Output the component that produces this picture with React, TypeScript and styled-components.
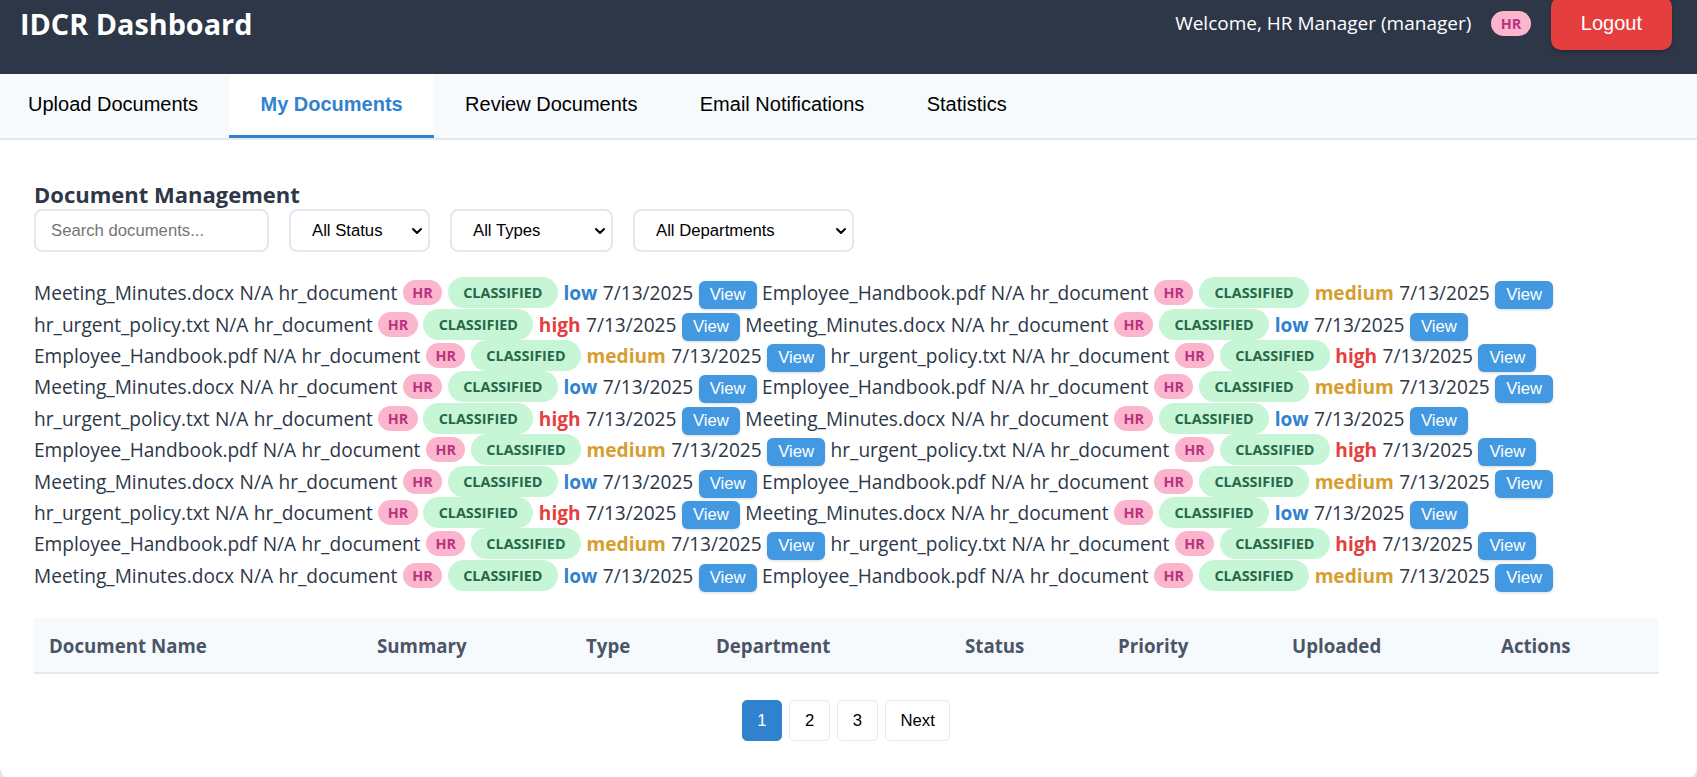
import React from "react";
import styled, { createGlobalStyle } from "styled-components";
import { ChevronDown } from "lucide-react";

const GlobalStyle = createGlobalStyle`
  html, body { margin: 0; padding: 0; background: #e2e8f0; }
  body { font-family: "Open Sans", "Noto Sans", sans-serif; color: #2d3748; }
  *, *::before, *::after { box-sizing: border-box; }
`;

const Header = styled.header`
  height: 74px;
  background: #2d3748;
  display: flex;
  align-items: center;
  justify-content: space-between;
  padding: 0 25px 28px 20px;
`;

const Title = styled.h1`
  margin: 0;
  font-size: 28.8px;
  font-weight: 700;
  line-height: 1.2;
  color: #ffffff;
  transform: translateY(1px);
`;

const UserArea = styled.div`
  display: flex;
  align-items: center;
  gap: 20px;
`;

const Welcome = styled.span`
  font-size: 19px;
  color: #ffffff;
`;

const DeptBadge = styled.span`
  display: inline-block;
  height: 25px;
  line-height: 25px;
  padding: 0 9.5px;
  border-radius: 13px;
  background: #fbb6ce;
  color: #b83280;
  font-size: 14.4px;
  font-weight: 700;
  word-spacing: 0;
  vertical-align: 2px;
`;

const LogoutButton = styled.button`
  height: 53px;
  padding: 0 30px;
  border: none;
  border-radius: 10px;
  background: #e53e3e;
  color: #ffffff;
  font-family: "Liberation Sans", Arial, sans-serif;
  font-size: 20px;
  box-shadow: 0 2px 4px rgba(0, 0, 0, 0.2);
  cursor: pointer;
`;

const TabBar = styled.nav`
  display: flex;
  height: 66px;
  background: #f7fafc;
  border-bottom: 2px solid #e2e8f0;
`;

const Tab = styled.button<{ $active?: boolean }>`
  height: 64px;
  padding: 0 31.2px;
  border: none;
  border-bottom: 3px solid ${(p) => (p.$active ? "#3182ce" : "transparent")};
  background: ${(p) => (p.$active ? "#ffffff" : "transparent")};
  color: ${(p) => (p.$active ? "#3182ce" : "#000000")};
  font-family: "Liberation Sans", Arial, sans-serif;
  font-size: 20px;
  font-weight: ${(p) => (p.$active ? 700 : 400)};
  cursor: pointer;
  &:first-child { padding-left: 28px; }
`;

const Card = styled.main`
  background: #ffffff;
  border-radius: 0 0 15px 15px;
  padding: 39px 39px 40px 34px;
`;

const SectionTitle = styled.h2`
  margin: 0;
  font-size: 22px;
  font-weight: 700;
  line-height: 30px;
  color: #2d3748;
`;

const Filters = styled.div`
  display: flex;
  gap: 20px;
`;

const SearchInput = styled.input`
  width: 235px;
  height: 43px;
  padding: 0 15px;
  border: 2px solid #e2e8f0;
  border-radius: 8px;
  font-family: "Liberation Sans", Arial, sans-serif;
  font-size: 16.7px;
  color: #000;
  outline: none;
  &::placeholder { color: #757575; }
`;

const SelectWrap = styled.div<{ $w: number }>`
  position: relative;
  width: ${(p) => p.$w}px;
  height: 43px;
`;

const Select = styled.select`
  width: 100%;
  height: 100%;
  appearance: none;
  -webkit-appearance: none;
  padding: 0 30px 0 21px;
  border: 2px solid #e2e8f0;
  border-radius: 8px;
  background: #ffffff;
  font-family: "Liberation Sans", Arial, sans-serif;
  font-size: 16.7px;
  color: #000;
  outline: none;
`;

const Chevron = styled(ChevronDown)`
  position: absolute;
  right: 5px;
  top: 50%;
  transform: translateY(-50%);
  pointer-events: none;
  color: #000;
`;

const DocList = styled.div`
  margin-top: 25.3px;
  font-size: 19.1px;
  word-spacing: 0.5px;
  color: #2d3748;
`;

const Line = styled.div`
  height: 31.4px;
  line-height: 31.4px;
  white-space: nowrap;
`;

const StatusPill = styled.span`
  display: inline-block;
  height: 31px;
  line-height: 31px;
  padding: 0 15.5px;
  border-radius: 16px;
  background: #c6f6d5;
  color: #276749;
  font-size: 14.4px;
  font-weight: 700;
  word-spacing: 0;
  vertical-align: 2px;
`;

const priorityColors: Record<string, string> = {
  low: "#3182ce",
  medium: "#d69e2e",
  high: "#e53e3e",
};

const Priority = styled.strong<{ $level: string }>`
  font-weight: 700;
  color: ${(p) => priorityColors[p.$level]};
`;

const ViewButton = styled.button`
  display: inline-block;
  height: 28px;
  padding: 0 11px;
  border: none;
  border-radius: 6px;
  background: #4299e1;
  color: #ffffff;
  font-family: "Liberation Sans", Arial, sans-serif;
  font-size: 16.7px;
  line-height: 28px;
  box-shadow: 0 1px 3px rgba(0, 0, 0, 0.15);
  cursor: pointer;
`;

const Table = styled.table`
  width: 100%;
  margin-top: 26.8px;
  border-collapse: separate;
  border-spacing: 0;
  table-layout: fixed;
`;

const Col = styled.col<{ $w: number }>`
  width: ${(p) => p.$w}px;
`;

const Th = styled.th`
  height: 56px;
  padding: 0 15px;
  text-align: left;
  background: #f7fafc;
  border-bottom: 2px solid #e2e8f0;
  color: #4a5568;
  font-size: 18.7px;
  font-weight: 700;
`;

const Pagination = styled.div`
  display: flex;
  justify-content: center;
  gap: 7.5px;
  margin-top: 26px;
`;

const PageButton = styled.button<{ $active?: boolean }>`
  height: 41px;
  min-width: 40px;
  padding: 0 14.5px;
  border: 1px solid ${(p) => (p.$active ? "#3182ce" : "#e2e8f0")};
  border-radius: 5px;
  background: ${(p) => (p.$active ? "#3182ce" : "#ffffff")};
  color: ${(p) => (p.$active ? "#ffffff" : "#000000")};
  font-family: "Liberation Sans", Arial, sans-serif;
  font-size: 16.7px;
  cursor: pointer;
`;

type Doc = { name: string; priority: string };

const cycle: Doc[] = [
  { name: "Meeting_Minutes.docx", priority: "low" },
  { name: "Employee_Handbook.pdf", priority: "medium" },
  { name: "hr_urgent_policy.txt", priority: "high" },
];

const docs: Doc[] = Array.from({ length: 20 }, (_, i) => cycle[i % 3]);
const lines: Doc[][] = Array.from({ length: 10 }, (_, i) => docs.slice(i * 2, i * 2 + 2));

const tabs = ["Upload Documents", "My Documents", "Review Documents", "Email Notifications", "Statistics"];
const columns: [string, number][] = [
  ["Document Name", 328],
  ["Summary", 209],
  ["Type", 130],
  ["Department", 249],
  ["Status", 153],
  ["Priority", 174],
  ["Uploaded", 209],
  ["Actions", 173],
];

function DocItem({ doc }: { doc: Doc }) {
  return (
    <>
      {doc.name} N/A hr_document <DeptBadge>HR</DeptBadge> <StatusPill>CLASSIFIED</StatusPill>{" "}
      <Priority $level={doc.priority}>{doc.priority}</Priority> 7/13/2025 <ViewButton>View</ViewButton>
    </>
  );
}

export default function App() {
  return (
    <>
      <GlobalStyle />
      <Header>
        <Title>IDCR Dashboard</Title>
        <UserArea>
          <Welcome>Welcome, HR Manager (manager)</Welcome>
          <DeptBadge>HR</DeptBadge>
          <LogoutButton>Logout</LogoutButton>
        </UserArea>
      </Header>
      <TabBar>
        {tabs.map((t) => (
          <Tab key={t} $active={t === "My Documents"}>
            {t}
          </Tab>
        ))}
      </TabBar>
      <Card>
        <SectionTitle>Document Management</SectionTitle>
        <Filters>
          <SearchInput placeholder="Search documents..." />
          <SelectWrap $w={141}>
            <Select defaultValue="">
              <option value="">All Status</option>
            </Select>
            <Chevron size={16} strokeWidth={3} />
          </SelectWrap>
          <SelectWrap $w={163}>
            <Select defaultValue="">
              <option value="">All Types</option>
            </Select>
            <Chevron size={16} strokeWidth={3} />
          </SelectWrap>
          <SelectWrap $w={221}>
            <Select defaultValue="">
              <option value="">All Departments</option>
            </Select>
            <Chevron size={16} strokeWidth={3} />
          </SelectWrap>
        </Filters>
        <DocList>
          {lines.map((pair, i) => (
            <Line key={i}>
              <DocItem doc={pair[0]} /> <DocItem doc={pair[1]} />
            </Line>
          ))}
        </DocList>
        <Table>
          <colgroup>
            {columns.map(([h, w]) => (
              <Col key={h} $w={w} />
            ))}
          </colgroup>
          <thead>
            <tr>
              {columns.map(([h]) => (
                <Th key={h}>{h}</Th>
              ))}
            </tr>
          </thead>
          <tbody />
        </Table>
        <Pagination>
          <PageButton $active>1</PageButton>
          <PageButton>2</PageButton>
          <PageButton>3</PageButton>
          <PageButton>Next</PageButton>
        </Pagination>
      </Card>
    </>
  );
}
